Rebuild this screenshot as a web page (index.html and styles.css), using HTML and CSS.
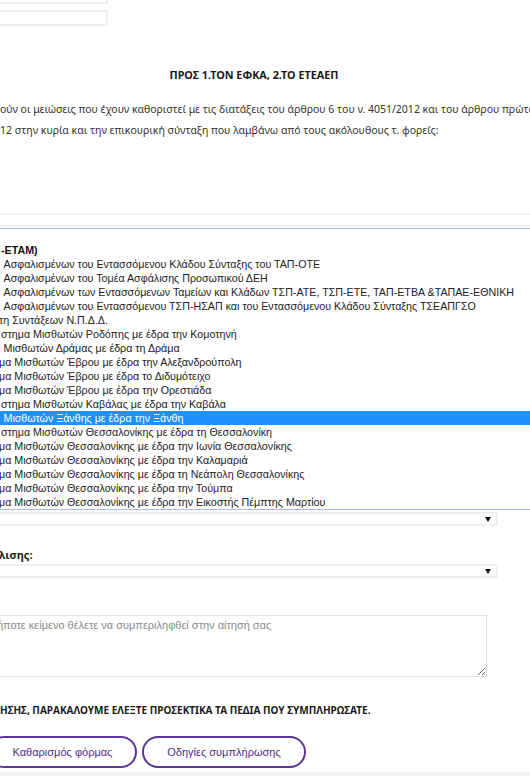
FILE: index.html
```html
<!DOCTYPE html>
<html lang="el">
<head>
<meta charset="utf-8">
<title>Αίτηση</title>
<link rel="stylesheet" href="styles.css">
</head>
<body>
<div class="page">
  <div class="field field-a"><span class="field-val">11/1955</span></div>
  <div class="field field-b"></div>

  <h2 class="title">ΠΡΟΣ 1.ΤΟΝ ΕΦΚΑ, 2.ΤΟ ΕΤΕΑΕΠ</h2>

  <div class="para">
    <div class="para-line">ούν οι μειώσεις που έχουν καθοριστεί με τις διατάξεις του άρθρου 6 του ν. 4051/2012 και του άρθρου πρώτου</div>
    <div class="para-line">12 στην κυρία και την επικουρική σύνταξη που λαμβάνω από τους ακόλουθους τ. φορείς:</div>
  </div>

  <div class="select select-top"></div>

  <div class="dropdown">
    <div class="opt"></div>
    <div class="opt group">-ΕΤΑΜ)</div>
    <div class="opt sp">Ασφαλισμένων του Εντασσόμενου Κλάδου Σύνταξης του ΤΑΠ-ΟΤΕ</div>
    <div class="opt sp">Ασφαλισμένων του Τομέα Ασφάλισης Προσωπικού ΔΕΗ</div>
    <div class="opt sp">Ασφαλισμένων των Εντασσόμενων Ταμείων και Κλάδων ΤΣΠ-ΑΤΕ, ΤΣΠ-ΕΤΕ, ΤΑΠ-ΕΤΒΑ &amp;ΤΑΠΑΕ-ΕΘΝΙΚΗ</div>
    <div class="opt sp">Ασφαλισμένων του Εντασσόμενου ΤΣΠ-ΗΣΑΠ και του Εντασσόμενου Κλάδου Σύνταξης ΤΣΕΑΠΓΣΟ</div>
    <div class="opt cut">τη Συντάξεων Ν.Π.Δ.Δ.</div>
    <div class="opt">στημα Μισθωτών Ροδόπης με έδρα την Κομοτηνή</div>
    <div class="opt sp">Μισθωτών Δράμας με έδρα τη Δράμα</div>
    <div class="opt cut">μα Μισθωτών Έβρου με έδρα την Αλεξανδρούπολη</div>
    <div class="opt cut">μα Μισθωτών Έβρου με έδρα το Διδυμότειχο</div>
    <div class="opt cut">μα Μισθωτών Έβρου με έδρα την Ορεστιάδα</div>
    <div class="opt">στημα Μισθωτών Καβάλας με έδρα την Καβάλα</div>
    <div class="opt sp selected">Μισθωτών Ξάνθης με έδρα την Ξάνθη</div>
    <div class="opt">στημα Μισθωτών Θεσσαλονίκης με έδρα τη Θεσσαλονίκη</div>
    <div class="opt cut">μα Μισθωτών Θεσσαλονίκης με έδρα την Ιωνία Θεσσαλονίκης</div>
    <div class="opt cut">μα Μισθωτών Θεσσαλονίκης με έδρα την Καλαμαριά</div>
    <div class="opt cut">μα Μισθωτών Θεσσαλονίκης με έδρα τη Νεάπολη Θεσσαλονίκης</div>
    <div class="opt cut">μα Μισθωτών Θεσσαλονίκης με έδρα την Τούμπα</div>
    <div class="opt cut">μα Μισθωτών Θεσσαλονίκης με έδρα την Εικοστής Πέμπτης Μαρτίου</div>
  </div>

  <div class="select select-open"><span class="arrow"></span></div>

  <label class="label">λισης:</label>
  <div class="select select-second"><span class="arrow"></span></div>

  <textarea class="notes" placeholder="ήποτε κείμενο θέλετε να συμπεριληφθεί στην αίτησή σας"></textarea>

  <p class="warning">ΗΣΗΣ, ΠΑΡΑΚΑΛΟΥΜΕ ΕΛΕΞΤΕ ΠΡΟΣΕΚΤΙΚΑ ΤΑ ΠΕΔΙΑ ΠΟΥ ΣΥΜΠΛΗΡΩΣΑΤΕ.</p>

  <div class="buttons">
    <button class="btn btn-clear" type="button">Καθαρισμός φόρμας</button>
    <button class="btn btn-help" type="button">Οδηγίες συμπλήρωσης</button>
  </div>
</div>
<div class="footer"></div>
</body>
</html>
```
FILE: styles.css
```css
html, body {
  margin: 0;
  padding: 0;
  overflow: hidden;
  background: #fff;
}
body {
  width: 530px;
  height: 776px;
  font-family: "Noto Sans", "DejaVu Sans", sans-serif;
  color: #333;
}
.page {
  display: flex;
  flex-direction: column;
  align-items: flex-start;
}
.field {
  box-sizing: border-box;
  border: 2px solid #f0f0f0;
  height: 16px;
  width: 120px;
  margin-left: -12px;
}
.field-a {
  margin-top: -12px;
  font-family: "Liberation Sans", Arial, sans-serif;
  font-size: 12px;
  line-height: 12px;
  color: #555;
  padding-left: 20px;
  overflow: hidden;
}
.field-val {
  display: inline-block;
  transform: translateY(-5px);
}
.field-b {
  margin-top: 6px;
}
.title {
  align-self: stretch;
  margin: 41px 0 0 0;
  padding-right: 22px;
  text-align: center;
  font-size: 10.8px;
  line-height: 16px;
  font-weight: 700;
  color: #1a1a1a;
}
.para {
  margin-top: 16px;
  align-self: stretch;
  font-size: 10.5px;
  line-height: 21px;
  color: #333;
}
.para-line {
  white-space: nowrap;
  overflow: hidden;
}
.select {
  box-sizing: border-box;
  height: 14px;
  border: 2px solid #f0f0f0;
  background: #fff;
  display: flex;
  align-items: center;
  justify-content: flex-end;
  margin-left: -10px;
}
.select-top {
  margin-top: 72px;
  width: 560px;
}
.arrow {
  width: 0;
  height: 0;
  border-left: 3px solid transparent;
  border-right: 3px solid transparent;
  border-top: 5px solid #111;
  margin-right: 5px;
}
.dropdown {
  margin-top: 1px;
  margin-left: -10px;
  width: 570px;
  border: 1px solid #a9bcdf;
  background: #fff;
  font-family: "Liberation Sans", Arial, sans-serif;
  font-size: 10.7px;
  color: #222;
}
.opt {
  height: 14px;
  line-height: 14px;
  white-space: nowrap;
  padding-left: 10px;
}
.opt.sp {
  padding-left: 12.5px;
}
.opt.cut {
  padding-left: 8px;
}
.opt.group {
  font-weight: 700;
  color: #111;
  padding-left: 10px;
}
.opt.selected {
  background: #1e90ff;
  color: #fff;
}
.select-open {
  margin-top: 2px;
  width: 508px;
}
.label {
  margin-top: 21px;
  margin-left: -1px;
  font-size: 11px;
  line-height: 16px;
  font-weight: 700;
  color: #222;
}
.select-second {
  margin-top: 1px;
  width: 508px;
}
.notes {
  box-sizing: border-box;
  margin: 37px 0 0 -10px;
  width: 497px;
  height: 62px;
  border: 1px solid #e3e3e3;
  padding: 3px 6px;
  font-family: "Liberation Sans", Arial, sans-serif;
  font-size: 11px;
  resize: vertical;
  outline: none;
}
.notes::placeholder {
  color: #8a8a8a;
}
.warning {
  margin: 25px 0 0 0;
  font-size: 10px;
  line-height: 16px;
  font-weight: 700;
  color: #1a1a1a;
  white-space: nowrap;
}
.buttons {
  margin-top: 18px;
  margin-left: -12px;
  display: flex;
  gap: 5px;
}
.btn {
  box-sizing: border-box;
  height: 32px;
  border: 2px solid #5e3495;
  border-radius: 16px;
  background: #fff;
  color: #4f2c87;
  font-family: "Liberation Sans", Arial, sans-serif;
  font-size: 11px;
  padding: 0;
}
.btn-clear {
  width: 149px;
}
.btn-help {
  width: 164px;
}
.footer {
  margin-top: 4px;
  height: 20px;
  background: #f2f2f2;
}
```
